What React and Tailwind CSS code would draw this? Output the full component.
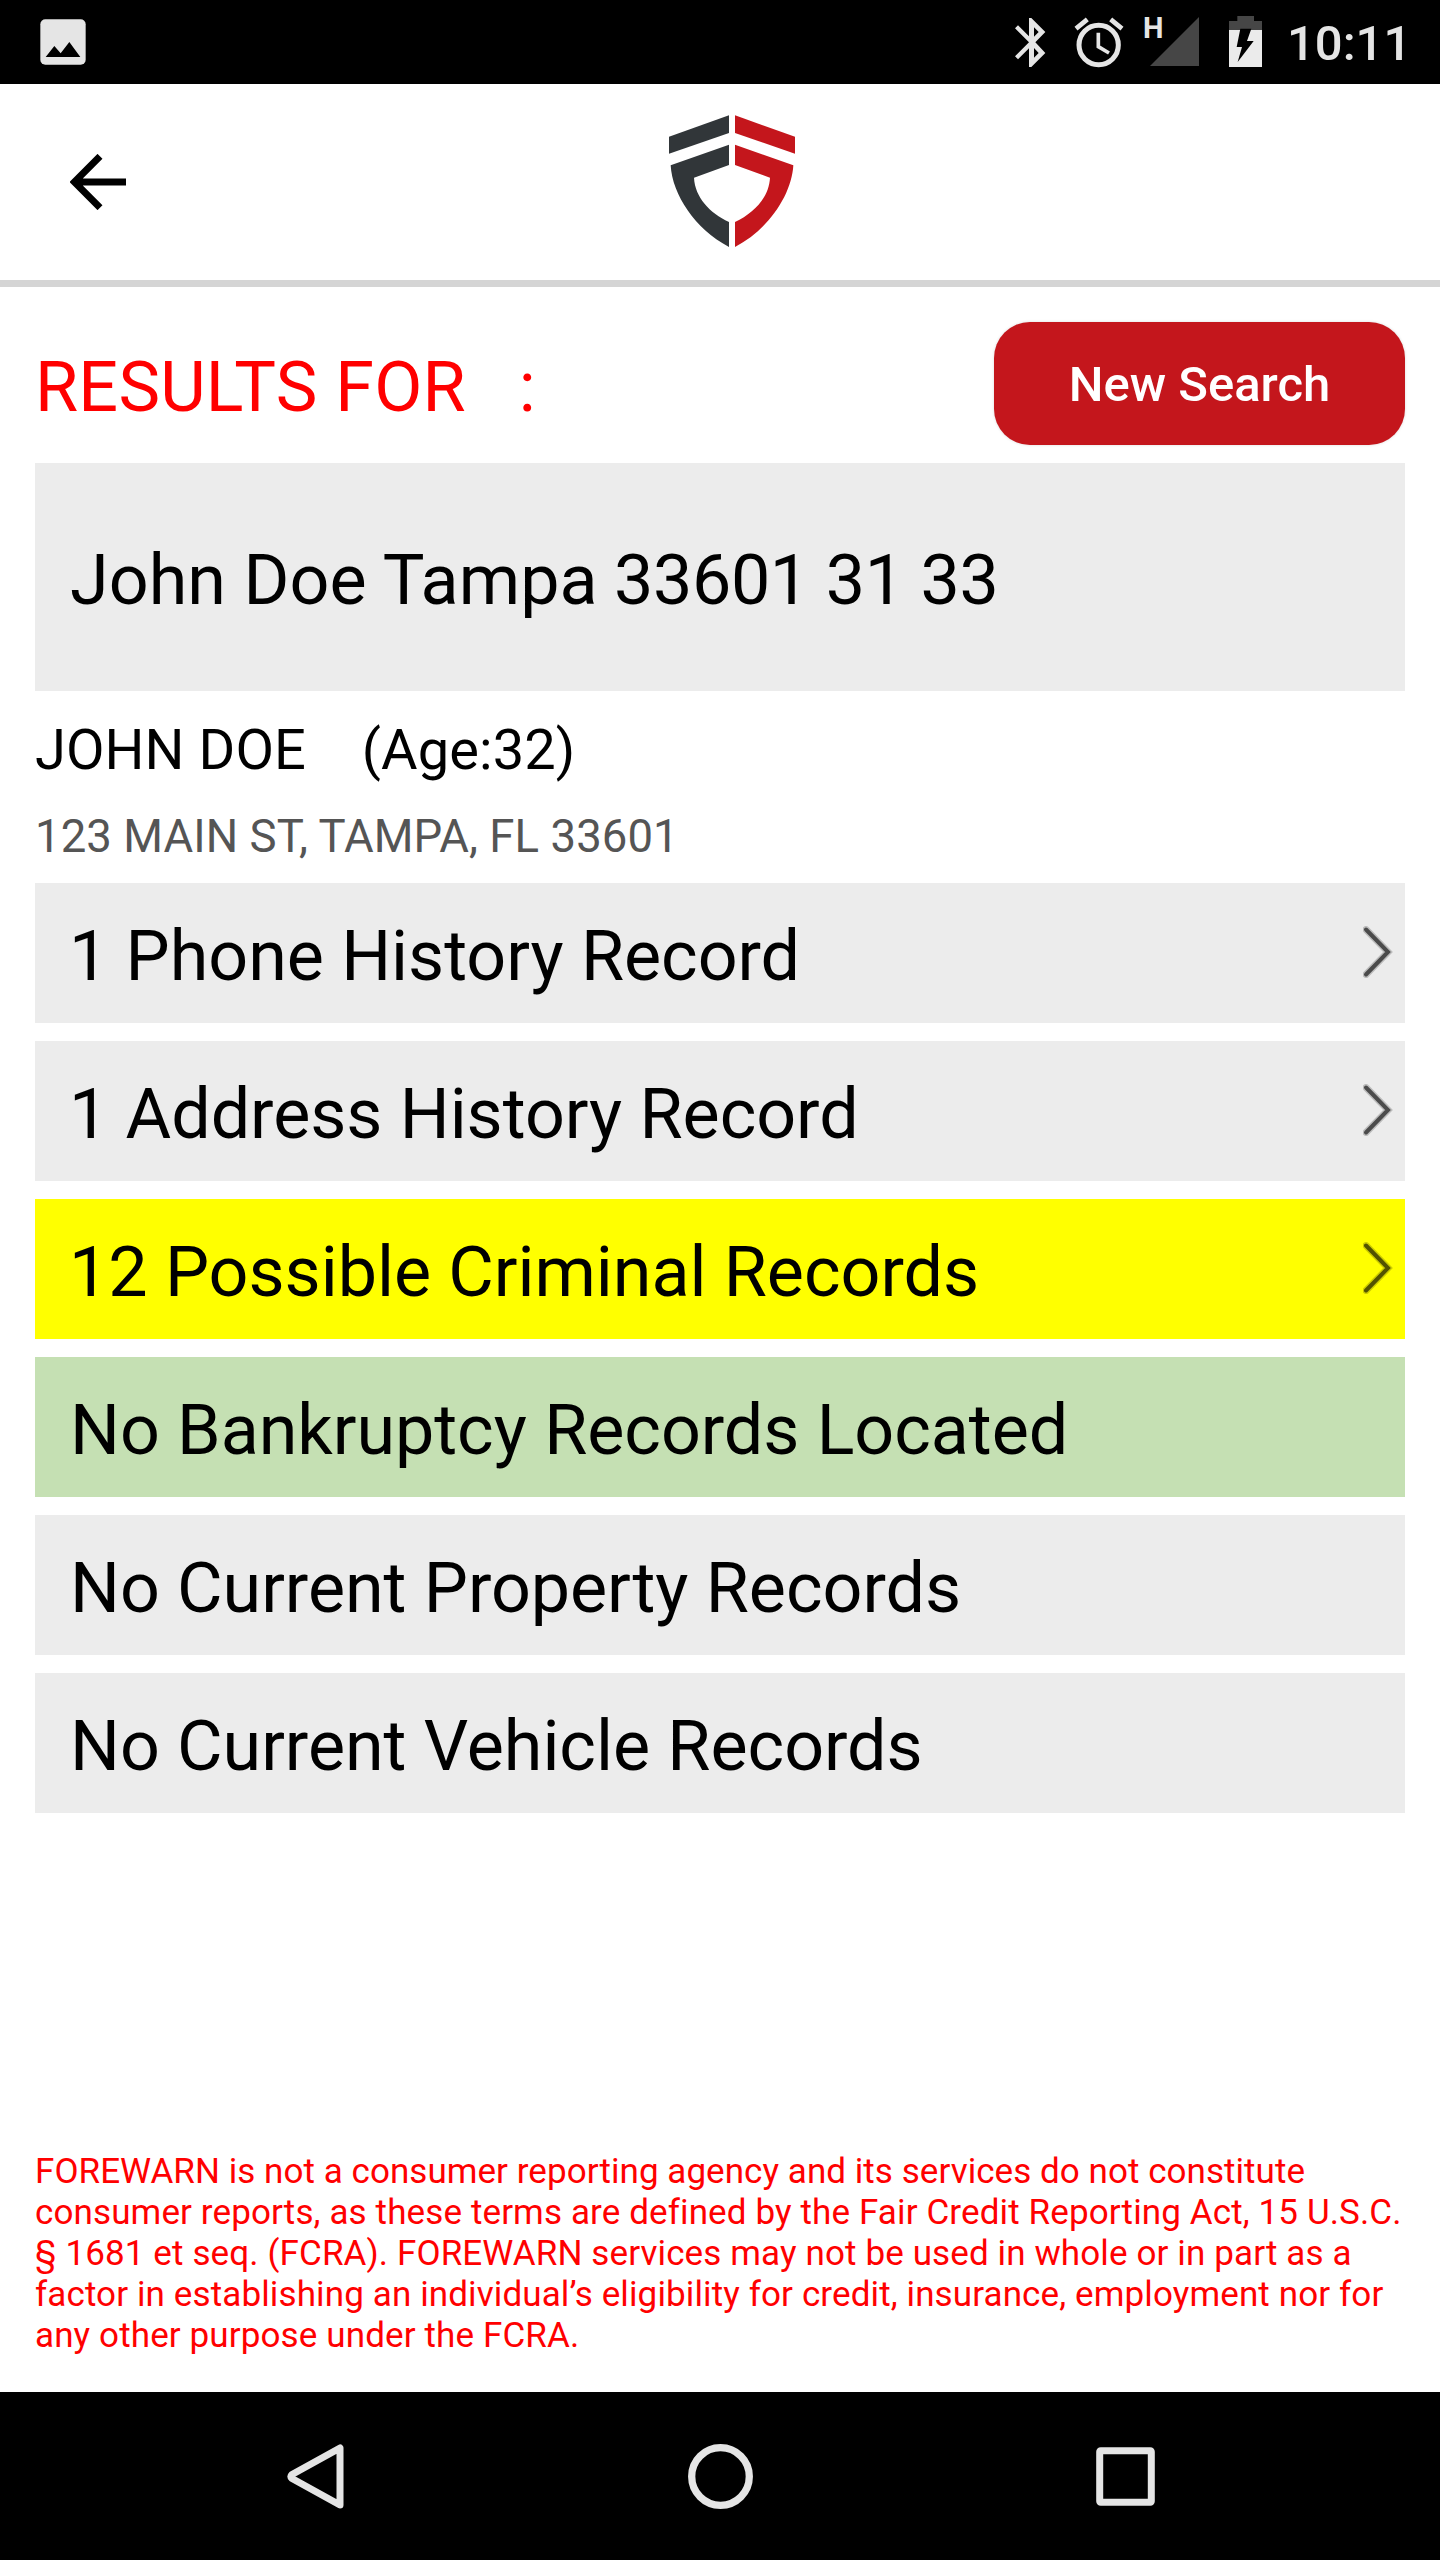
const records = [
  { label: '1 Phone History Record', tone: 'bg-[#ececec]', link: true },
  { label: '1 Address History Record', tone: 'bg-[#ececec]', link: true },
  { label: '12 Possible Criminal Records', tone: 'bg-[#ffff00]', link: true },
  { label: 'No Bankruptcy Records Located', tone: 'bg-[#c5e0b3]' },
  { label: 'No Current Property Records', tone: 'bg-[#ececec]' },
  { label: 'No Current Vehicle Records', tone: 'bg-[#ececec]' },
];

function StatusBar() {
  return (
    <div className="flex h-[84px] shrink-0 items-start bg-black text-[#e5e5e5]">
      <svg className="mt-[19px] ml-10 h-[46px] w-[46px]" viewBox="0 0 138 138">
        <rect x="1" y="1" width="136" height="136" rx="15" fill="#e5e5e5" />
        <path d="M17 114 43 81 62 103 88 69 121 114z" fill="#000" />
      </svg>
      <svg className="mt-[18px] ml-[929px] h-[49px] w-[31px]" viewBox="0 0 93 147">
        <path d="M42 0h7L91 42 61 73 91 105 49 147h-7V91L9 124 0 115 42 73 0 31 9 22 42 55zM57 28v28l14-14zM57 90v29l14-14z" fill="#e5e5e5" fillRule="evenodd" />
      </svg>
      <svg className="mt-[17px] ml-[28px] h-[51px] w-[50px]" viewBox="0 0 150 153">
        <circle cx="74" cy="84" r="59" fill="none" stroke="#e5e5e5" strokeWidth="15" />
        <path d="M6 35 40 7M144 35 110 7" stroke="#e5e5e5" strokeWidth="14" />
        <path d="M73 47V89L105 108" fill="none" stroke="#e5e5e5" strokeWidth="11" />
      </svg>
      <div className="relative ml-[19px] h-[67px] w-[56px]">
        <span className="absolute left-0 top-[14px] text-[29px] leading-[29px] font-bold">H</span>
        <svg className="absolute right-0 top-[17px] h-[49px] w-[49px]" viewBox="0 0 49 49">
          <path d="M49 0V49H0z" fill="#464646" />
        </svg>
      </div>
      <svg className="mt-4 ml-[30px] h-[51px] w-[33px]" viewBox="0 0 99 153">
        <path d="M25 0H75V15H99V43H0V15H25z" fill="#464646" />
        <path d="M0 42H99V153H0z" fill="#ebebeb" />
        <path d="M34 38H67L54 75H74L26 138 39 93H23z" fill="#000" />
      </svg>
      <span className="mt-[15px] ml-[25px] text-[49px] leading-[57px] font-medium whitespace-nowrap">10:11</span>
    </div>
  );
}

function Header() {
  return (
    <header className="flex h-[203px] shrink-0 items-start border-b-[7px] border-[#d5d5d5]">
      <svg className="mt-[70px] ml-[70px] h-14 w-14" viewBox="0 0 168 168">
        <path d="M90 7 13 84 90 161M20 84H168" fill="none" stroke="#000" strokeWidth="21" />
      </svg>
      <svg className="mt-[31px] ml-[543px] h-[132px] w-[126px]" viewBox="87 75 378 396">
        <path d="M87 140 267 76V129L87 191z" fill="#313639" />
        <path d="M285 76 465 140V191L285 129z" fill="#c4161c" />
        <path d="M267 164V225L162 263C165 322 209 368 267 396V471C165 417 97 314 92 226z" fill="#313639" />
        <path d="M285 164V225L390 263C387 322 343 368 285 396V471C387 417 455 314 460 226z" fill="#c4161c" />
      </svg>
    </header>
  );
}

function Chevron() {
  return (
    <svg className="mb-[3px] h-[52px] w-[30px]" viewBox="0 0 30 52">
      <path d="M3 3.500 25 26 3 48.500" fill="none" stroke="#000" strokeOpacity="0.2" strokeWidth="7" strokeLinecap="round" />
      <path d="M3 3.500 25 26 3 48.500" fill="none" stroke="#000" strokeOpacity="0.6" strokeWidth="4" strokeLinecap="round" />
    </svg>
  );
}

function NavBar() {
  return (
    <nav className="flex h-[168px] shrink-0 items-start bg-black">
      <svg className="mt-[51px] ml-[286px] h-[67px] w-[60px]" viewBox="0 0 60 67">
        <path d="M54 5V62L6 35.500Q4 33.500 6 31.500z" fill="none" stroke="#e5e5e5" strokeWidth="7" strokeLinejoin="round" />
      </svg>
      <svg className="mt-[52px] ml-[342px] h-[65px] w-[65px]" viewBox="0 0 65 65">
        <circle cx="32.500" cy="32.500" r="28.800" fill="none" stroke="#e5e5e5" strokeWidth="7.300" />
      </svg>
      <svg className="mt-[55px] ml-[343px] h-[59px] w-[59px]" viewBox="0 0 59 59">
        <rect x="3.700" y="3.700" width="51.600" height="51.600" rx="1" fill="none" stroke="#e5e5e5" strokeWidth="7" />
      </svg>
    </nav>
  );
}

export default function App() {
  return (
    <div className="flex h-[2560px] w-[1440px] flex-col overflow-hidden bg-white font-['Roboto',sans-serif] text-black">
      <StatusBar />
      <Header />
      <main className="flex flex-1 flex-col px-[35px] pt-[35px]">
        <div className="flex h-[123px] items-center justify-between">
          <h1 className="mt-[7px] text-[70px] leading-[82px] tracking-[0.24px] whitespace-pre text-[#ff0000]">{'RESULTS FOR   :'}</h1>
          <button className="h-[123px] w-[411px] rounded-[36px] bg-[#c4161c] pt-[3px] text-[49px] font-medium text-white shadow-[0_0_3px_rgba(0,0,0,0.15)]">
            New Search
          </button>
        </div>
        <div className="mt-[18px] flex h-[228px] items-center bg-[#ececec] pl-[35px] text-[70px] leading-[82px] whitespace-pre">
          <span className="mt-[6px] tracking-[0.06px]">John Doe Tampa </span>
          <span className="mt-[6px] -ml-px tracking-[-0.4px]">33601 31 33</span>
        </div>
        <p className="mt-[26px] text-[56px] leading-[66px] tracking-[0.080px] whitespace-pre">{'JOHN DOE    (Age:32)'}</p>
        <p className="mt-[27px] text-[45.500px] leading-[54px] tracking-[0.070px] text-[#555555]">123 MAIN ST, TAMPA, FL 33601</p>
        <ul className="mt-[19px] flex flex-col gap-[18px]">
          {records.map((r) => (
            <li key={r.label} className={`flex h-[140px] items-center justify-between pr-3 text-[70px] leading-[82px] tracking-[-0.04px] ${r.link ? 'pl-[34px]' : 'pl-[35px]'} ${r.tone}`}>
              <span className="mt-[6px]">{r.label}</span>
              {r.link && <Chevron />}
            </li>
          ))}
        </ul>
        <p className="mt-auto mb-[36px] text-[35px] leading-[41px] tracking-[0.12px] whitespace-nowrap text-[#ff0000]">
          <span className="tracking-[0.050px]">FOREWARN is not a consumer reporting agency and its services do not constitute</span><br />
          consumer reports, as these terms are defined by the Fair Credit Reporting Act, 15 U.S.C.<br />
          § 1681 et seq. (FCRA). FOREWARN services may not be used in whole or in part as a<br />
          factor in establishing an individual’s eligibility for credit, insurance, employment nor for<br />
          any other purpose under the FCRA.
        </p>
      </main>
      <NavBar />
    </div>
  );
}
